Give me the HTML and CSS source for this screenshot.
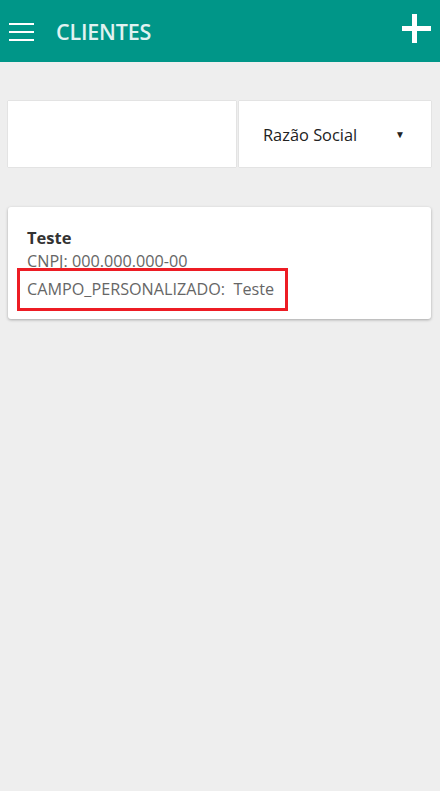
FILE: index.html
```html
<!DOCTYPE html>
<html lang="pt">
<head>
<meta charset="utf-8">
<link rel="stylesheet" href="styles.css">
</head>
<body>
<header class="topbar">
  <div class="menu-icon"><span></span><span></span><span></span></div>
  <h1 class="title">CLIENTES</h1>
  <div class="plus"><span class="h"></span><span class="v"></span></div>
</header>
<main class="content">
  <div class="search-row">
    <div class="search-input"></div>
    <div class="search-select"><span>Razão Social</span><span class="arrow">▼</span></div>
  </div>
  <div class="card">
    <div class="card-title">Teste</div>
    <div class="card-line">CNPJ: 000.000.000-00</div>
    <div class="highlight"><span class="card-line">CAMPO_PERSONALIZADO:&nbsp; Teste</span></div>
  </div>
</main>
</body>
</html>
```
FILE: styles.css
```css
html, body { margin: 0; padding: 0; }
body {
  background: #eeeeee;
  font-family: "Open Sans", "Noto Sans", sans-serif;
  width: 440px;
  height: 791px;
}
.topbar {
  height: 62px;
  background: #009688;
  display: flex;
  align-items: center;
  padding: 0 9px;
  box-sizing: border-box;
}
.menu-icon {
  width: 25px;
  display: flex;
  flex-direction: column;
  gap: 6px;
  margin-top: 1px;
}
.menu-icon span {
  display: block;
  height: 2px;
  background: #ffffff;
}
.title {
  margin: 0 0 0 22px;
  font-size: 21.5px;
  font-weight: 600;
  color: #e0f2f1;
  letter-spacing: -0.2px;
  flex: 1;
}
.plus {
  position: relative;
  width: 29px;
  height: 29px;
  margin-top: -6px;
}
.plus span { position: absolute; background: #fff; }
.plus .h { left: 0; top: 12px; width: 29px; height: 5px; }
.plus .v { left: 10px; top: 0; width: 5px; height: 29px; }
.content { padding: 39px 9px 0 8px; }
.search-row {
  display: flex;
  gap: 3px;
  height: 66px;
}
.search-input {
  width: 228px;
  background: #fff;
  box-shadow: 0 0 1px rgba(0,0,0,0.25);
}
.search-select {
  flex: 1;
  background: #fff;
  box-shadow: 0 0 1px rgba(0,0,0,0.25);
  display: flex;
  align-items: center;
  justify-content: space-between;
  padding: 0 26px 0 24px;
  font-size: 16.4px;
  color: #222;
}
.arrow { font-size: 10px; }
.card {
  margin-top: 40px;
  background: #fff;
  border-radius: 3px;
  box-shadow: 0 1px 3px rgba(0,0,0,0.3);
  padding: 19px 19px 10px 19px;
  height: 112px;
  box-sizing: border-box;
}
.card-title {
  font-size: 16.5px;
  font-weight: 700;
  color: #333;
  line-height: 23px;
}
.card-line {
  font-size: 16.2px;
  color: #666;
  line-height: 25px;
  display: block;
}
.highlight {
  display: inline-block;
  border: 3px solid #ed1c24;
  margin-left: -10px;
  padding: 6px 11px 6px 7px;
  margin-top: -6px;
}
```
